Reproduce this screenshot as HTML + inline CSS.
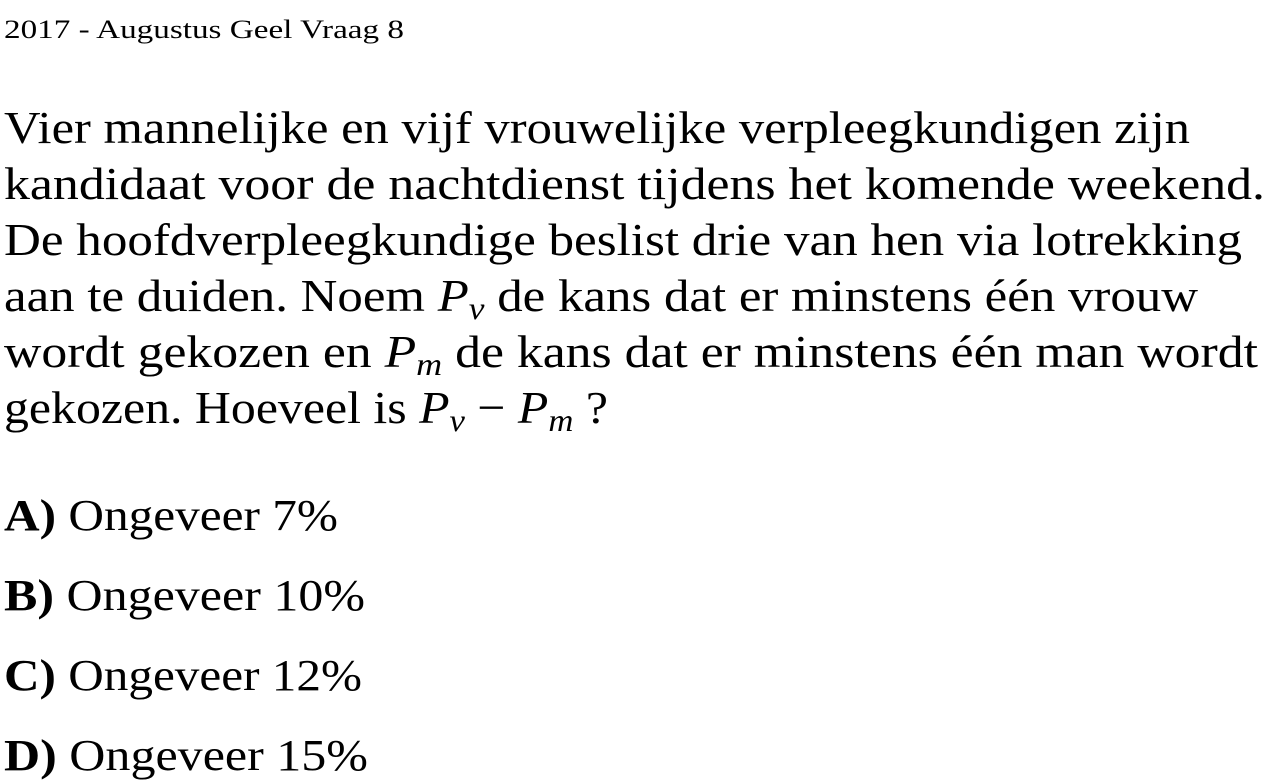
<!DOCTYPE html>
<html><head><meta charset="utf-8"><style>
html,body{margin:0;padding:0;background:#fff;width:1272px;height:784px;overflow:hidden}
svg{display:block}
text{font-family:"Liberation Serif",serif;fill:#000}
.m{font-style:italic}
</style></head><body>
<svg width="1272" height="784" viewBox="0 0 1272 784" xmlns="http://www.w3.org/2000/svg">
<text x="4" y="38" font-size="26" textLength="400" lengthAdjust="spacingAndGlyphs">2017 - Augustus Geel Vraag 8</text>
<g font-size="46">
<text x="4" y="143" textLength="1186" lengthAdjust="spacingAndGlyphs">Vier mannelijke en vijf vrouwelijke verpleegkundigen zijn</text>
<text x="4" y="199" textLength="1261" lengthAdjust="spacingAndGlyphs">kandidaat voor de nachtdienst tijdens het komende weekend.</text>
<text x="4" y="255" textLength="1238" lengthAdjust="spacingAndGlyphs">De hoofdverpleegkundige beslist drie van hen via lotrekking</text>
<text x="4" y="311" textLength="1194" lengthAdjust="spacingAndGlyphs">aan te duiden. Noem <tspan class="m">P</tspan><tspan class="m" font-size="32" dy="8">v</tspan><tspan dy="-8"> de kans dat er minstens één vrouw</tspan></text>
<text x="4" y="367" textLength="1254" lengthAdjust="spacingAndGlyphs">wordt gekozen en <tspan class="m">P</tspan><tspan class="m" font-size="32" dy="8">m</tspan><tspan dy="-8"> de kans dat er minstens één man wordt</tspan></text>
<text x="4" y="423" textLength="604" lengthAdjust="spacingAndGlyphs">gekozen. Hoeveel is <tspan class="m">P</tspan><tspan class="m" font-size="32" dy="8">v</tspan><tspan dy="-8">  − </tspan><tspan class="m">P</tspan><tspan class="m" font-size="32" dy="8">m</tspan><tspan dy="-8"> ?</tspan></text>
</g>
<g font-size="44">
<text x="4" y="530" textLength="334" lengthAdjust="spacingAndGlyphs"><tspan font-weight="bold">A)</tspan> Ongeveer 7%</text>
<text x="4" y="610" textLength="361" lengthAdjust="spacingAndGlyphs"><tspan font-weight="bold">B)</tspan> Ongeveer 10%</text>
<text x="4" y="690" textLength="358" lengthAdjust="spacingAndGlyphs"><tspan font-weight="bold">C)</tspan> Ongeveer 12%</text>
<text x="4" y="770" textLength="364" lengthAdjust="spacingAndGlyphs"><tspan font-weight="bold">D)</tspan> Ongeveer 15%</text>
</g>
</svg>
</body></html>
